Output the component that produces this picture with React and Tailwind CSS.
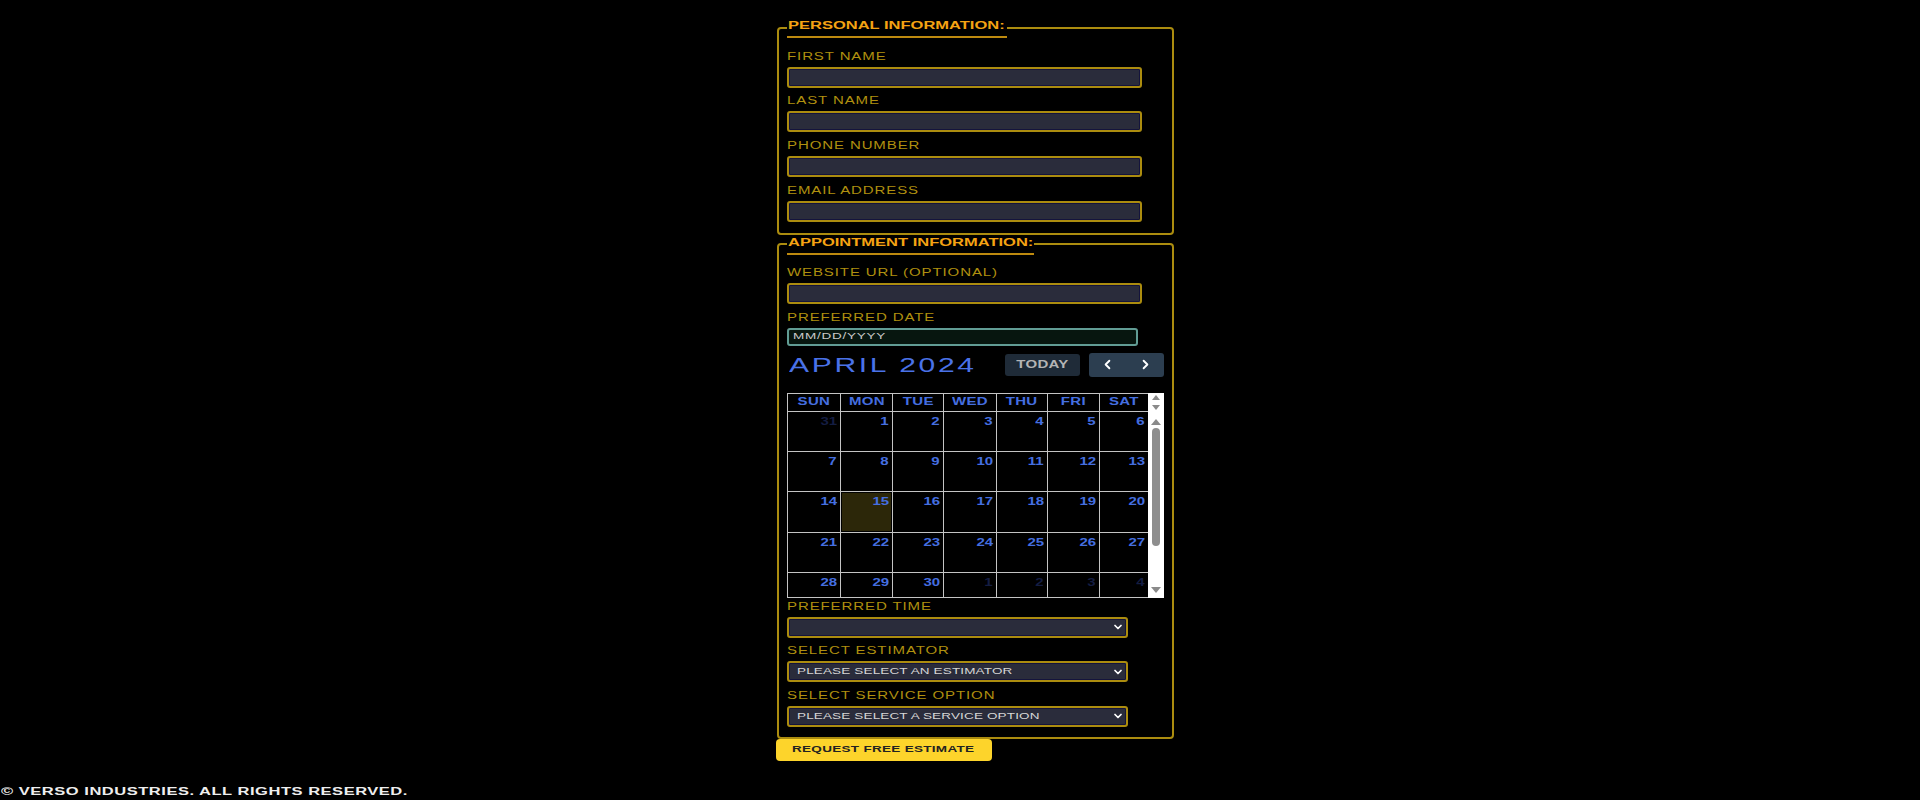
import { ChevronDown, ChevronLeft, ChevronRight } from "lucide-react";

const weeks = [
  [[31, true], [1], [2], [3], [4], [5], [6]],
  [[7], [8], [9], [10], [11], [12], [13]],
  [[14], [15], [16], [17], [18], [19], [20]],
  [[21], [22], [23], [24], [25], [26], [27]],
  [[28], [29], [30], [1, true], [2, true], [3, true], [4, true]],
];
const days = ["SUN", "MON", "TUE", "WED", "THU", "FRI", "SAT"];

const origins = { left: "origin-left", center: "origin-center", right: "origin-right" };

// the original face is an extended one, so the glyphs get stretched sideways
function Wide({ children, origin = "left" }) {
  return (
    <span className={`inline-block scale-x-[1.5] whitespace-nowrap ${origins[origin]}`}>
      {children}
    </span>
  );
}

function Label({ children }) {
  return (
    <div className="flex h-[23.67px] items-center pt-[3px] text-[10px] tracking-[0.6px] text-[#b0900f]">
      <Wide>{children}</Wide>
    </div>
  );
}

function Field({ label }) {
  return (
    <div>
      <Label>{label}</Label>
      <input
        type="text"
        className="block h-[21px] w-[355px] rounded-[3px] border-2 border-[#ab8c0f] bg-[#2a2c3b] shadow-[inset_0_0_0_1px_#14143c]"
      />
    </div>
  );
}

function SelectField({ label, value }) {
  return (
    <div>
      <Label>{label}</Label>
      <div className="flex h-[21px] w-[341px] items-center justify-between rounded-[3px] border-2 border-[#ab8c0f] bg-[#2a2c3b] pl-2 pr-[2px] text-[9px] tracking-[0.1px] text-[#d6d6d6] shadow-[inset_0_0_0_1px_#14143c]">
        <Wide>{value}</Wide>
        <ChevronDown size={12} strokeWidth={3.5} className="text-white" />
      </div>
    </div>
  );
}

function Legend({ children, width }) {
  return (
    <legend className={`h-[21px] border-b-2 border-[#bd8a0f] pl-px text-[11px] font-bold text-[#f5a313] ${width}`}>
      <Wide>{children}</Wide>
    </legend>
  );
}

function Scrollbar() {
  return (
    <div className="flex w-4 flex-col items-center bg-white">
      <div className="flex h-[19px] flex-col items-center justify-center gap-[5px]">
        <svg width="8" height="5" viewBox="0 0 8 5"><path d="M4 0 8 5H0z" fill="#8a8a8a" /></svg>
        <svg width="8" height="5" viewBox="0 0 8 5"><path d="M0 0h8L4 5z" fill="#8a8a8a" /></svg>
      </div>
      <svg className="mt-[7px]" width="10" height="6" viewBox="0 0 10 6"><path d="M5 0 10 6H0z" fill="#8a8a8a" /></svg>
      <div className="mt-[3px] h-[118px] w-2 rounded bg-[#8e8e8e]" />
      <svg className="mt-auto mb-[5px]" width="10" height="6" viewBox="0 0 10 6"><path d="M0 0h10L5 6z" fill="#8a8a8a" /></svg>
    </div>
  );
}

function Calendar() {
  return (
    <div className="flex w-[377px]">
      <div className="grid w-[361px] grid-cols-[53px_52px_51px_53px_51px_52px_49px] grid-rows-[18px_40px_40px_41px_40px_25px] border-l border-t border-[#c4c4c4] text-[10px] font-bold text-[#456fe0]">
        {days.map((d) => (
          <div key={d} className="flex items-center justify-center border-b border-r border-[#c4c4c4] pb-px tracking-[0.2px]">
            <Wide origin="center">{d}</Wide>
          </div>
        ))}
        {weeks.flat().map(([n, muted], i) => (
          <div
            key={i}
            className={`border-b border-r border-[#c4c4c4] pr-[3px] pt-[2px] text-right ${muted ? "text-[#141d42]" : ""} ${i === 15 ? "bg-[#2c2709] shadow-[inset_0_0_0_1px_#000]" : ""}`}
          >
            <Wide origin="right">{n}</Wide>
          </div>
        ))}
      </div>
      <Scrollbar />
    </div>
  );
}

export default function App() {
  return (
    <div className="flex h-[800px] flex-col bg-black font-['Liberation_Sans',sans-serif]">
      <div className="ml-[776px] w-[398px] pt-[17px]">
        <fieldset className="ml-px w-[397px] rounded border-2 border-[#ab8c0f] pb-[11px] pl-2">
          <Legend width="w-[220px]">PERSONAL INFORMATION:</Legend>
          <div className="pt-[5px]">
            <Field label="FIRST NAME" />
            <Field label="LAST NAME" />
            <Field label="PHONE NUMBER" />
            <Field label="EMAIL ADDRESS" />
          </div>
        </fieldset>

        <fieldset className="-mt-px ml-px w-[397px] rounded border-2 border-[#ab8c0f] pb-[10px] pl-2">
          <Legend width="w-[247px]">APPOINTMENT INFORMATION:</Legend>
          <div className="pt-[5px]">
            <Field label="WEBSITE URL (OPTIONAL)" />
            <div>
              <Label>PREFERRED DATE</Label>
              <div className="flex h-[18px] w-[351px] items-center rounded-[3px] border-2 border-[#619c94] bg-[#07160f] pl-[4px] text-[9px] tracking-[0.5px] text-[#c8c8c8]">
                <Wide>MM/DD/YYYY</Wide>
              </div>
            </div>
            <div className="flex h-[47px] w-[377px] items-center pb-[9px]">
              <div className="pl-[2px] text-[20px] tracking-[1.8px] text-[#4a72e8]">
                <Wide>APRIL 2024</Wide>
              </div>
              <button className="ml-auto flex h-[22px] w-[75px] items-center justify-center rounded-[3px] bg-[#1f2b38] text-[10px] font-bold tracking-[0.2px] text-[#b4b4b4]">
                <Wide origin="center">TODAY</Wide>
              </button>
              <div className="ml-[9px] flex h-6 w-[75px] items-center justify-around rounded-[3px] bg-[#2c3e50] text-white">
                <ChevronLeft size={15} strokeWidth={3} />
                <ChevronRight size={15} strokeWidth={3} />
              </div>
            </div>
            <Calendar />
            <div className="-mt-[5px]">
              <SelectField label="PREFERRED TIME" value="" />
            </div>
            <SelectField label="SELECT ESTIMATOR" value="PLEASE SELECT AN ESTIMATOR" />
            <SelectField label="SELECT SERVICE OPTION" value="PLEASE SELECT A SERVICE OPTION" />
          </div>
        </fieldset>

        <button className="block h-[22px] w-[216px] rounded-[4px] bg-[#fdd42b] pl-[16px] text-left text-[9px] font-bold tracking-[0.2px] text-[#222]">
          <Wide>REQUEST FREE ESTIMATE</Wide>
        </button>
      </div>

      <footer className="mt-auto pb-px pl-px text-[11px] font-bold tracking-[0.35px] text-[#eeeeee]">
        <Wide>© VERSO INDUSTRIES. ALL RIGHTS RESERVED.</Wide>
      </footer>
    </div>
  );
}
